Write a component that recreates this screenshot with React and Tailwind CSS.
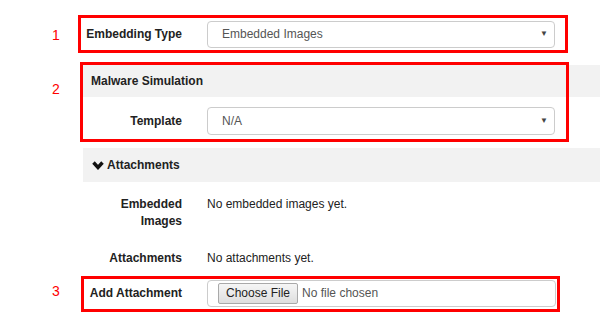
export default function App() {
  const font = { fontFamily: '"Liberation Sans", Arial, Helvetica, sans-serif' };
  const label = "w-[110px] -ml-[10px] flex justify-end whitespace-nowrap font-bold";
  return (
    <div className="relative w-[600px] h-[318px] bg-white text-[12px] text-[#222] overflow-hidden" style={font}>
      {/* annotation numbers */}
      <span className="absolute left-[52px] top-[25px] text-[#f00] text-[14px]">1</span>
      <span className="absolute left-[52px] top-[79px] text-[#f00] text-[14px]">2</span>
      <span className="absolute left-[52px] top-[281px] text-[#f00] text-[14px]">3</span>

      <div className="pt-[15px] pl-[82px]">
        {/* Embedding type */}
        <div className="flex items-center h-[38px]">
          <div className={label}>Embedding Type</div>
          <div className="ml-[25px] w-[348px] h-[27px] flex items-center justify-between border border-[#ccc] rounded-[4px] pl-[14px] pr-[6px] text-[#555]">
            <span>Embedded Images</span>
            <span className="text-[8px] text-[#444]">▼</span>
          </div>
        </div>

        {/* Malware simulation */}
        <div className="mt-[12px] h-[32px] bg-[#f2f2f2] flex items-center pl-[9px] font-bold">Malware Simulation</div>
        <div className="flex items-center h-[48px]">
          <div className={label}>Template</div>
          <div className="ml-[25px] w-[348px] h-[28px] flex items-center justify-between border border-[#ccc] rounded-[4px] pl-[14px] pr-[6px] text-[#555]">
            <span>N/A</span>
            <span className="text-[8px] text-[#444]">▼</span>
          </div>
        </div>

        {/* Attachments */}
        <div className="mt-[3px] ml-[1px] h-[34px] bg-[#f2f2f2] flex items-center pl-[9px] font-bold">
          <svg width="12" height="9" viewBox="0 0 12 9" className="mr-[3px]">
            <polyline points="1.5,1.5 6,6.5 10.5,1.5" fill="none" stroke="#111" strokeWidth="3.4" />
          </svg>
          Attachments
        </div>

        <div className="flex mt-[14px] leading-[17px]">
          <div className="w-[110px] -ml-[10px] text-right font-bold">Embedded<br />Images</div>
          <div className="ml-[25px]">No embedded images yet.</div>
        </div>

        <div className="flex mt-[19px]">
          <div className={label}>Attachments</div>
          <div className="ml-[25px]">No attachments yet.</div>
        </div>

        <div className="flex items-center mt-[8px] h-[36px]">
          <div className={label}>Add Attachment</div>
          <div className="ml-[25px] w-[349px] h-[27px] flex items-center border border-[#ccc] rounded-[4px] pl-[10px] text-[#555]">
            <span className="h-[21px] px-[7px] flex items-center border border-[#a9a9a9] rounded-[2px] bg-gradient-to-b from-[#f6f6f6] to-[#dedede] text-[#222]">Choose File</span>
            <span className="ml-[4px]">No file chosen</span>
          </div>
        </div>
      </div>

      {/* red annotation boxes */}
      <div className="absolute left-[78px] top-[15px] w-[490px] h-[38px] border-[3px] border-[#f00]" />
      <div className="absolute left-[80px] top-[62px] w-[489px] h-[80px] border-[3px] border-[#f00]" />
      <div className="absolute left-[81px] top-[276px] w-[479px] h-[36px] border-[3px] border-[#f00]" />
    </div>
  );
}
